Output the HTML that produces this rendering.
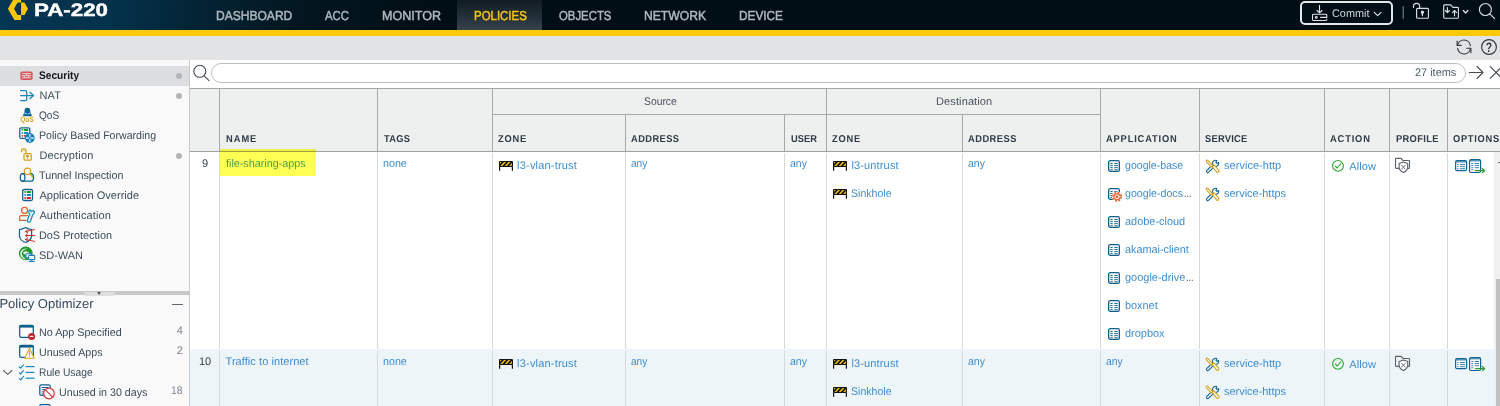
<!DOCTYPE html>
<html lang="en"><head><meta charset="utf-8"><title>PA-220 - Policies - Security</title>
<style>
html,body{margin:0;padding:0}
body{width:1500px;height:406px;overflow:hidden;position:relative;background:#fff;font-family:"Liberation Sans",sans-serif;text-rendering:geometricPrecision}
.t{position:absolute;white-space:nowrap;display:block;transform-origin:0 0}
i,b,s{position:absolute;display:block}
#topbar{position:absolute;left:0;top:0;width:1500px;height:30px;background:linear-gradient(100deg,#053653 0px,#04324c 110px,#032232 205px,#02161f 305px,#010e15 425px,#010e15 100%)}
#tab-active{position:absolute;left:457px;top:0;width:85px;height:30px;background:linear-gradient(180deg,#111c24 0%,#222e37 50%,#36424b 100%)}
#commit{position:absolute;left:1300px;top:1px;width:89px;height:20px;border:2px solid #e3e7ea;border-radius:5px}
#stripe{position:absolute;left:0;top:30px;width:1500px;height:6px;background:#fdc90b}
#toolbar{position:absolute;left:0;top:36px;width:1500px;height:24px;background:#e2e3e4}
#side{position:absolute;left:0;top:0;width:190px;height:406px;background:linear-gradient(90deg,#f9f9f9 189px,#c5c9cc 189px) 0 60px/190px 346px no-repeat}
#sel{position:absolute;left:0;top:66px;width:189px;height:20px;background:#dcddde}
.dot{left:176px;width:6px;height:6px;border-radius:3px;background:#b4b5b6}
#split{position:absolute;left:0;top:291px;width:189px;height:4px;background:#c6c8ca}
#split b{left:83px;top:0.5px;width:32.5px;height:4.5px;background:#dcdedf;clip-path:polygon(0 0,100% 0,91.5% 100%,9.5% 100%)}
#split s{left:96.8px;top:0.8px;width:0;height:0;border-left:2.8px solid transparent;border-right:2.8px solid transparent;border-top:3.6px solid #55585b}
#minus{left:171.5px;top:304px;width:11px;height:1px;background:#5d6873}
#searchrow{position:absolute;left:190px;top:60px;width:1310px;height:28px;background:#fff}
#pill{position:absolute;left:21px;top:2.5px;width:1253px;height:18.5px;border:1px solid #bcc0c4;border-radius:10px}
#thead{position:absolute;left:190px;top:88px;width:1310px;height:63px;background:#eeefef;border-top:1px solid #a3a7ab;border-bottom:1px solid #9da1a5;box-sizing:content-box;height:62px}
.vh{width:1px;background:#a6aaae}
.hh{height:1px;background:#a6aaae}
.vb{width:1px;background:#d7dadc}
#row9{position:absolute;left:190px;top:152px;width:1304px;height:197px;background:#fff}
#row10{position:absolute;left:190px;top:349px;width:1304px;height:57px;background:#eef5f8}
#hl{position:absolute;left:220px;top:149px;width:96px;height:27px;background:#ffff54;mix-blend-mode:multiply}
#strack{position:absolute;left:1494px;top:152px;width:6px;height:254px;background:#f1f1f1}
#sthumb{position:absolute;left:1496px;top:279px;width:4px;height:127px;background:#c1c1c1}
#icons{position:absolute;left:0;top:0;width:1500px;height:406px;pointer-events:none}
#tick{position:absolute;left:1498px;top:162px;width:2px;height:1px;background:#666}

</style></head>
<body>
<div id="topbar">
<div id="tab-active"></div>
<span class="t logo" style="left:34.0px;top:-1.00px;font-size:18px;line-height:22px;transform:scaleX(1.2396);font-weight:bold;color:#fff;-webkit-text-stroke:0.4px #fff;">PA-220</span>
<span class="t nav" style="left:216.2px;top:7.00px;font-size:13px;line-height:17px;transform:scaleX(0.9265);color:#adb6bd;-webkit-text-stroke:0.5px;">DASHBOARD</span>
<span class="t nav" style="left:325.0px;top:7.00px;font-size:13px;line-height:17px;transform:scaleX(0.8744);color:#adb6bd;-webkit-text-stroke:0.5px;">ACC</span>
<span class="t nav" style="left:382.0px;top:7.00px;font-size:13px;line-height:17px;transform:scaleX(0.9649);color:#adb6bd;-webkit-text-stroke:0.5px;">MONITOR</span>
<span class="t nav" style="left:473.5px;top:7.00px;font-size:13px;line-height:17px;transform:scaleX(0.8805);color:#f4c41b;-webkit-text-stroke:0.5px;">POLICIES</span>
<span class="t nav" style="left:559.0px;top:7.00px;font-size:13px;line-height:17px;transform:scaleX(0.8740);color:#adb6bd;-webkit-text-stroke:0.5px;">OBJECTS</span>
<span class="t nav" style="left:644.0px;top:7.00px;font-size:13px;line-height:17px;transform:scaleX(0.9332);color:#adb6bd;-webkit-text-stroke:0.5px;">NETWORK</span>
<span class="t nav" style="left:739.0px;top:7.00px;font-size:13px;line-height:17px;transform:scaleX(0.9091);color:#adb6bd;-webkit-text-stroke:0.5px;">DEVICE</span>
<div id="commit"></div>
<span class="t" style="left:1331.8px;top:7.00px;font-size:11px;line-height:14px;transform:scaleX(0.9898);color:#d3d8dc;">Commit</span>
</div>
<div id="stripe"></div>
<div id="toolbar"></div>
<div id="side">
<div id="sel"></div>
<span class="t" style="left:39.4px;top:69.00px;font-size:11px;line-height:14px;transform:scaleX(0.9238);font-weight:bold;color:#12181f;">Security</span>
<span class="t" style="left:39.4px;top:89.00px;font-size:11px;line-height:14px;letter-spacing:0.158px;color:#3c4b5c;">NAT</span>
<span class="t" style="left:39.4px;top:109.00px;font-size:11px;line-height:14px;transform:scaleX(0.9177);color:#3c4b5c;">QoS</span>
<span class="t" style="left:39.4px;top:129.00px;font-size:11px;line-height:14px;transform:scaleX(0.9625);color:#3c4b5c;">Policy Based Forwarding</span>
<span class="t" style="left:39.4px;top:149.00px;font-size:11px;line-height:14px;letter-spacing:0.147px;color:#3c4b5c;">Decryption</span>
<span class="t" style="left:39.4px;top:169.00px;font-size:11px;line-height:14px;transform:scaleX(0.9766);color:#3c4b5c;">Tunnel Inspection</span>
<span class="t" style="left:39.4px;top:189.00px;font-size:11px;line-height:14px;letter-spacing:0.034px;color:#3c4b5c;">Application Override</span>
<span class="t" style="left:39.4px;top:209.00px;font-size:11px;line-height:14px;letter-spacing:0.145px;color:#3c4b5c;">Authentication</span>
<span class="t" style="left:39.4px;top:229.00px;font-size:11px;line-height:14px;transform:scaleX(0.9867);color:#3c4b5c;">DoS Protection</span>
<span class="t" style="left:39.4px;top:249.00px;font-size:11px;line-height:14px;transform:scaleX(0.9955);color:#3c4b5c;">SD-WAN</span>
<i class="dot" style="top:72.5px"></i>
<i class="dot" style="top:92.5px"></i>
<i class="dot" style="top:152.5px"></i>
<div id="split"><b></b><s></s></div>
<span class="t" style="left:-0.6px;top:295.00px;font-size:13px;line-height:17px;letter-spacing:0.013px;color:#33475b;">Policy Optimizer</span>
<i id="minus"></i>
<span class="t" style="left:39.3px;top:326.00px;font-size:11px;line-height:14px;transform:scaleX(0.9800);color:#3c4b5c;">No App Specified</span>
<span class="t" style="left:176.8px;top:324.00px;font-size:11px;line-height:14px;color:#7b8794;">4</span>
<span class="t" style="left:39.3px;top:346.00px;font-size:11px;line-height:14px;transform:scaleX(0.9704);color:#3c4b5c;">Unused Apps</span>
<span class="t" style="left:176.8px;top:344.00px;font-size:11px;line-height:14px;color:#7b8794;">2</span>
<span class="t" style="left:38.8px;top:366.00px;font-size:11px;line-height:14px;transform:scaleX(0.9326);color:#3c4b5c;">Rule Usage</span>
<span class="t" style="left:59.3px;top:386.00px;font-size:11px;line-height:14px;transform:scaleX(0.9691);color:#3c4b5c;">Unused in 30 days</span>
<span class="t" style="left:171.0px;top:384.00px;font-size:11px;line-height:14px;transform:scaleX(0.9317);color:#7b8794;">18</span>
</div>
<div id="searchrow"><div id="pill"></div></div>
<span class="t" style="left:1414.7px;top:66.00px;font-size:11px;line-height:14px;transform:scaleX(0.9934);color:#4d5b6a;">27 items</span>
<div id="thead"></div>
<i class="vh" style="left:219px;top:89px;height:62px"></i>
<i class="vh" style="left:377px;top:89px;height:62px"></i>
<i class="vh" style="left:492px;top:89px;height:62px"></i>
<i class="vh" style="left:1100px;top:89px;height:62px"></i>
<i class="vh" style="left:1199px;top:89px;height:62px"></i>
<i class="vh" style="left:1324px;top:89px;height:62px"></i>
<i class="vh" style="left:1389px;top:89px;height:62px"></i>
<i class="vh" style="left:1447px;top:89px;height:62px"></i>
<i class="vh" style="left:625px;top:115px;height:36px"></i>
<i class="vh" style="left:784px;top:115px;height:36px"></i>
<i class="vh" style="left:962px;top:115px;height:36px"></i>
<i class="vh" style="left:826px;top:89px;height:62px"></i>
<i class="hh" style="left:493px;top:114px;width:607px"></i>
<span class="t" style="left:643.7px;top:95.00px;font-size:11px;line-height:14px;transform:scaleX(0.9411);color:#47525e;">Source</span>
<span class="t" style="left:936.0px;top:95.00px;font-size:11px;line-height:14px;letter-spacing:0.117px;color:#47525e;">Destination</span>
<span class="t" style="left:225.5px;top:133.00px;font-size:10px;line-height:13px;letter-spacing:1.046px;transform:scaleX(0.9300);font-weight:bold;color:#2f3b47;">NAME</span>
<span class="t" style="left:383.5px;top:133.00px;font-size:10px;line-height:13px;letter-spacing:0.271px;transform:scaleX(0.9300);font-weight:bold;color:#2f3b47;">TAGS</span>
<span class="t" style="left:498.1px;top:133.00px;font-size:10px;line-height:13px;letter-spacing:0.884px;transform:scaleX(0.9300);font-weight:bold;color:#2f3b47;">ZONE</span>
<span class="t" style="left:631.3px;top:133.00px;font-size:10px;line-height:13px;letter-spacing:0.453px;transform:scaleX(0.9300);font-weight:bold;color:#2f3b47;">ADDRESS</span>
<span class="t" style="left:790.6px;top:133.00px;font-size:10px;line-height:13px;letter-spacing:0.058px;transform:scaleX(0.9300);font-weight:bold;color:#2f3b47;">USER</span>
<span class="t" style="left:832.2px;top:133.00px;font-size:10px;line-height:13px;letter-spacing:0.812px;transform:scaleX(0.9300);font-weight:bold;color:#2f3b47;">ZONE</span>
<span class="t" style="left:968.0px;top:133.00px;font-size:10px;line-height:13px;letter-spacing:0.524px;transform:scaleX(0.9300);font-weight:bold;color:#2f3b47;">ADDRESS</span>
<span class="t" style="left:1106.2px;top:133.00px;font-size:10px;line-height:13px;letter-spacing:0.909px;transform:scaleX(0.9300);font-weight:bold;color:#2f3b47;">APPLICATION</span>
<span class="t" style="left:1205.2px;top:133.00px;font-size:10px;line-height:13px;letter-spacing:0.276px;transform:scaleX(0.9300);font-weight:bold;color:#2f3b47;">SERVICE</span>
<span class="t" style="left:1330.4px;top:133.00px;font-size:10px;line-height:13px;letter-spacing:0.915px;transform:scaleX(0.9300);font-weight:bold;color:#2f3b47;">ACTION</span>
<span class="t" style="left:1395.7px;top:133.00px;font-size:10px;line-height:13px;letter-spacing:0.376px;transform:scaleX(0.9300);font-weight:bold;color:#2f3b47;">PROFILE</span>
<span class="t" style="left:1453.2px;top:133.00px;font-size:10px;line-height:13px;letter-spacing:0.761px;transform:scaleX(0.9300);font-weight:bold;color:#2f3b47;">OPTIONS</span>
<div id="row9"></div><div id="row10"></div>
<i class="vb" style="left:219px;top:153px;height:196px"></i>
<i class="vb" style="left:219px;top:351px;height:55px"></i>
<i class="vb" style="left:377px;top:153px;height:196px"></i>
<i class="vb" style="left:377px;top:351px;height:55px"></i>
<i class="vb" style="left:492px;top:153px;height:196px"></i>
<i class="vb" style="left:492px;top:351px;height:55px"></i>
<i class="vb" style="left:1100px;top:153px;height:196px"></i>
<i class="vb" style="left:1100px;top:351px;height:55px"></i>
<i class="vb" style="left:1199px;top:153px;height:196px"></i>
<i class="vb" style="left:1199px;top:351px;height:55px"></i>
<i class="vb" style="left:1324px;top:153px;height:196px"></i>
<i class="vb" style="left:1324px;top:351px;height:55px"></i>
<i class="vb" style="left:1389px;top:153px;height:196px"></i>
<i class="vb" style="left:1389px;top:351px;height:55px"></i>
<i class="vb" style="left:1447px;top:153px;height:196px"></i>
<i class="vb" style="left:1447px;top:351px;height:55px"></i>
<i class="vb" style="left:625px;top:153px;height:196px"></i>
<i class="vb" style="left:625px;top:351px;height:55px"></i>
<i class="vb" style="left:784px;top:153px;height:196px"></i>
<i class="vb" style="left:784px;top:351px;height:55px"></i>
<i class="vb" style="left:826px;top:153px;height:196px"></i>
<i class="vb" style="left:826px;top:351px;height:55px"></i>
<i class="vb" style="left:962px;top:153px;height:196px"></i>
<i class="vb" style="left:962px;top:351px;height:55px"></i>
<div id="hl"></div>
<div id="strack"></div><div id="sthumb"></div><i id="tick"></i>
<span class="t" style="left:202.0px;top:157.00px;font-size:11px;line-height:14px;color:#2f3b47;">9</span>
<span class="t" style="left:225.5px;top:157.00px;font-size:11px;line-height:14px;transform:scaleX(0.9801);color:#4f9d52;">file-sharing-apps</span>
<span class="t" style="left:383.4px;top:157.00px;font-size:11px;line-height:14px;transform:scaleX(0.9726);color:#3b8dd1;">none</span>
<span class="t" style="left:517.1px;top:159.00px;font-size:11px;line-height:14px;letter-spacing:0.187px;color:#3b8dd1;">l3-vlan-trust</span>
<span class="t" style="left:631.3px;top:157.00px;font-size:11px;line-height:14px;transform:scaleX(0.9191);color:#3b8dd1;">any</span>
<span class="t" style="left:790.0px;top:157.00px;font-size:11px;line-height:14px;transform:scaleX(0.9529);color:#3b8dd1;">any</span>
<span class="t" style="left:851.4px;top:159.00px;font-size:11px;line-height:14px;letter-spacing:0.150px;color:#3b8dd1;">l3-untrust</span>
<span class="t" style="left:851.4px;top:187.00px;font-size:11px;line-height:14px;transform:scaleX(0.9598);color:#3b8dd1;">Sinkhole</span>
<span class="t" style="left:968.0px;top:157.00px;font-size:11px;line-height:14px;transform:scaleX(0.9585);color:#3b8dd1;">any</span>
<span class="t" style="left:1224.0px;top:159.00px;font-size:11px;line-height:14px;letter-spacing:0.032px;color:#3b8dd1;">service-http</span>
<span class="t" style="left:1224.0px;top:187.00px;font-size:11px;line-height:14px;transform:scaleX(0.9943);color:#3b8dd1;">service-https</span>
<span class="t" style="left:1349.2px;top:160.00px;font-size:11px;line-height:14px;letter-spacing:0.128px;color:#3b8dd1;">Allow</span>
<span class="t" style="left:198.9px;top:355.00px;font-size:11px;line-height:14px;letter-spacing:0.065px;color:#2f3b47;">10</span>
<span class="t" style="left:225.5px;top:355.00px;font-size:11px;line-height:14px;letter-spacing:0.065px;color:#3b8dd1;">Traffic to internet</span>
<span class="t" style="left:383.4px;top:355.00px;font-size:11px;line-height:14px;transform:scaleX(0.9726);color:#3b8dd1;">none</span>
<span class="t" style="left:517.1px;top:357.00px;font-size:11px;line-height:14px;letter-spacing:0.187px;color:#3b8dd1;">l3-vlan-trust</span>
<span class="t" style="left:631.3px;top:355.00px;font-size:11px;line-height:14px;transform:scaleX(0.9191);color:#3b8dd1;">any</span>
<span class="t" style="left:790.0px;top:355.00px;font-size:11px;line-height:14px;transform:scaleX(0.9529);color:#3b8dd1;">any</span>
<span class="t" style="left:851.4px;top:357.00px;font-size:11px;line-height:14px;letter-spacing:0.150px;color:#3b8dd1;">l3-untrust</span>
<span class="t" style="left:851.4px;top:385.00px;font-size:11px;line-height:14px;transform:scaleX(0.9598);color:#3b8dd1;">Sinkhole</span>
<span class="t" style="left:968.0px;top:355.00px;font-size:11px;line-height:14px;transform:scaleX(0.9585);color:#3b8dd1;">any</span>
<span class="t" style="left:1224.0px;top:357.00px;font-size:11px;line-height:14px;letter-spacing:0.032px;color:#3b8dd1;">service-http</span>
<span class="t" style="left:1224.0px;top:385.00px;font-size:11px;line-height:14px;transform:scaleX(0.9943);color:#3b8dd1;">service-https</span>
<span class="t" style="left:1349.2px;top:358.00px;font-size:11px;line-height:14px;letter-spacing:0.128px;color:#3b8dd1;">Allow</span>
<span class="t" style="left:1106.3px;top:355.00px;font-size:11px;line-height:14px;transform:scaleX(0.9416);color:#3b8dd1;">any</span>
<span class="t" style="left:1125.0px;top:159.00px;font-size:11px;line-height:14px;transform:scaleX(0.9612);color:#3b8dd1;">google-base</span>
<span class="t" style="left:1125.0px;top:187.00px;font-size:11px;line-height:14px;transform:scaleX(0.9678);color:#3b8dd1;">google-docs</span>
<span class="t" style="left:1183.8px;top:187.00px;font-size:11px;line-height:14px;transform:scaleX(0.8071);color:#3a3f45;">...</span>
<span class="t" style="left:1125.0px;top:215.00px;font-size:11px;line-height:14px;transform:scaleX(0.9942);color:#3b8dd1;">adobe-cloud</span>
<span class="t" style="left:1125.0px;top:243.00px;font-size:11px;line-height:14px;transform:scaleX(0.9845);color:#3b8dd1;">akamai-client</span>
<span class="t" style="left:1125.0px;top:271.00px;font-size:11px;line-height:14px;transform:scaleX(0.9961);color:#3b8dd1;">google-drive</span>
<span class="t" style="left:1186.1px;top:271.00px;font-size:11px;line-height:14px;transform:scaleX(0.8071);color:#3a3f45;">...</span>
<span class="t" style="left:1125.0px;top:299.00px;font-size:11px;line-height:14px;transform:scaleX(0.9901);color:#3b8dd1;">boxnet</span>
<span class="t" style="left:1125.0px;top:327.00px;font-size:11px;line-height:14px;transform:scaleX(0.9962);color:#3b8dd1;">dropbox</span>
<svg id="icons" width="1500" height="406" viewBox="0 0 1500 406" fill="none" stroke-linecap="round" stroke-linejoin="round">
<defs>
<g id="zone"><rect x="0" y="0" width="14" height="6" rx="1" fill="#141414"/><path d="M1,1 L2.6,1 L1,2.8Z M1.4,5 L5,1 L7,1 L3.4,5Z M5.8,5 L9.4,1 L11.4,1 L7.8,5Z M10.2,5 L13,1.9 L13,4.1 L12.2,5Z" fill="#f7c30c"/><path d="M0.6,5.5V9.8M13.4,5.5V9.8" stroke="#141414" stroke-width="1.2" stroke-linecap="butt"/></g>
<g id="app"><rect x="0.65" y="0.65" width="10.7" height="10.7" rx="1.6" stroke="#0f608c" stroke-width="1.3" fill="#fff"/><path d="M2.3,3.45H4.7M6.3,3.45H9.8M2.3,5.55H4.7M6.3,5.55H9.8M2.3,7.65H4.7M6.3,7.65H9.8M2.3,9.75H4.7M6.3,9.75H9.8" stroke="#0f608c" stroke-width="0.95" stroke-linecap="butt"/></g>
<g id="gear"><circle r="5.2" fill="#fff"/><circle r="4.15" stroke="#e8622f" stroke-width="1.7" stroke-dasharray="1.8 1.46" stroke-linecap="butt"/><circle r="3.5" fill="#e8622f"/><circle r="2" stroke="#fff" stroke-width="1"/></g>
<g id="svc" stroke-width="1.1"><path d="M7.1,4.5 L1.3,10.3 Q0.4,11.4 1.3,12.2 Q2.2,13 3.1,12.1 L8.9,6.3" stroke="#0f6590" fill="#fff"/><path d="M13,2.4 A3.1,3.1 0 1 1 11.2,0.4 L10.3,2.3 L11.3,3.3 Z" stroke="#0f6590" fill="#fff"/><path d="M0.9,1.7 Q0.2,0.7 1.1,0.2 Q2,-0.2 2.7,0.7 L7,5.6 L5.6,6.9 Z" stroke="#d6a21c" fill="#fff"/><path d="M6.6,6.6 L8.5,4.9 L13,9.7 Q13.9,11 12.8,11.9 Q11.7,12.7 10.7,11.5 Z" stroke="#d6a21c" fill="#fff"/></g>
<g id="allow"><circle r="5.4" stroke="#27a52f" stroke-width="1.1"/><path d="M-2.6,0.2 L-0.8,2.1 L2.7,-2" stroke="#27a52f" stroke-width="1.1"/></g>
<g id="prof" stroke="#59626c" stroke-width="1.1"><path d="M4,10.5H1.5Q0.5,10.5 0.5,9.5V1.3Q0.5,0.5 1.3,0.5H6L8,2.6H13.6Q14.5,2.6 14.5,3.5V9.5Q14.5,10.5 13.6,10.5H12.8"/><path d="M8.4,4.1 L12.7,5.6 V9.3 Q12.7,12.6 8.4,14.7 Q4.1,12.6 4.1,9.3 V5.6 Z" fill="#fff"/><path d="M6.5,7.3 L10.3,11.3 M10.3,7.3 L6.5,11.3" stroke-width="0.9"/></g>
<g id="opt" stroke="#0f6496"><rect x="0.6" y="1.7" width="11" height="10" rx="1.5" stroke-width="1.2" fill="#fff"/><path d="M1,2.9H11.2" stroke-width="1"/><path d="M2.1,5.5H3.6M4.9,5.5H10.2M2.1,7.6H3.6M4.9,7.6H10.2M2.1,9.7H3.6M4.9,9.7H10.2" stroke-width="0.8" stroke-linecap="butt"/><rect x="14.6" y="0.5" width="11" height="13" rx="1.5" stroke-width="1.2" fill="#fff"/><path d="M15,1.8H25.2" stroke-width="1"/><path d="M16.3,4.5H18.3M19.6,4.5H24M16.3,6.6H18.3M19.6,6.6H24M16.3,8.7H18.3M19.6,8.7H24M16.3,10.8H18.3" stroke-width="0.8" stroke-linecap="butt"/><path d="M20.4,11.6H29.3M27.3,9.5L29.7,11.6L27.3,13.7" stroke="#2a9a33" stroke-width="1.2"/></g>
</defs>
<path d="M21.1,-2.5 L14.4,-2.5 L7.9,8.7 L14.4,19.9 L21.1,19.9 L21.1,14.9 L17.6,14.9 L14,8.7 L17.6,2.4 L21.1,2.4 Z M21.1,2.4 L24.5,2.4 L28,8.7 L24.5,14.9 L21.1,14.9 Z" fill="#fdc70a"/>
<g stroke="#dfe3e6" stroke-width="1.1"><path d="M1319.5,5.2V12.6M1317,10.5L1319.5,12.9L1322,10.5"/><path d="M1326.8,17.4H1320.6M1326.8,17.4V15.2Q1326.8,14.3 1325.9,14.3H1313.4Q1312.5,14.3 1312.5,15.2V19.6Q1312.5,20.5 1313.4,20.5H1325.9Q1326.8,20.5 1326.8,19.6V19.2"/><circle cx="1316.3" cy="17.4" r="0.9"/><path d="M1374.3,12.3L1377.7,15.7L1381.1,12.3"/></g>
<path d="M1403.25,6.3V18.8" stroke="#56646f" stroke-width="1.5" stroke-linecap="butt"/>
<g stroke="#d9dde0" stroke-width="1.15"><rect x="1416.6" y="8.4" width="11.8" height="9.8" rx="1"/><path d="M1413.5,7.4V6.4A3.1,3.1 0 0 1 1419.7,6.4V8.2"/><circle cx="1422.4" cy="12.2" r="1.1" fill="#d9dde0"/><path d="M1422.4,12.5V15.6" stroke-width="1.3"/></g>
<g stroke="#d9dde0" stroke-width="1.15"><path d="M1443.7,5.6Q1443.7,4.8 1444.6,4.8H1450.6L1453,7.3H1457.5Q1458.4,7.3 1458.4,8.2V17.3Q1458.4,18.2 1457.5,18.2H1444.6Q1443.7,18.2 1443.7,17.3Z"/><path d="M1447.4,7.6V12.4M1445.4,10.5L1447.4,12.6L1449.4,10.5M1454.5,15.8V10.8M1452.5,12.6L1454.5,10.5L1456.5,12.6"/><path d="M1463.3,10.5L1465.6,12.9L1467.9,10.5" stroke-width="1.4"/></g>
<g stroke="#d9dde0" stroke-width="1.15"><circle cx="1485.4" cy="9.5" r="6"/><path d="M1489.8,13.9L1494.6,18.6"/></g>
<g stroke="#333a40" stroke-width="1.15"><path d="M1457.6,45.2A6.5,6.5 0 0 1 1470.4,45.6"/><path d="M1457.1,41V45.4H1461.2"/><path d="M1470.4,48.8A6.5,6.5 0 0 1 1457.6,48.4"/><path d="M1470.9,52.7V48.2H1466.7"/></g>
<circle cx="1489" cy="47" r="7.4" stroke="#333a40" stroke-width="1.15"/>
<text transform="translate(1489,51.8) scale(0.8,1.06)" text-anchor="middle" font-family="Liberation Sans, sans-serif" font-weight="bold" font-size="13" fill="#333a40" stroke="none">?</text>
<g stroke="#444c54" stroke-width="1.1"><circle cx="199.8" cy="71.3" r="6"/><path d="M204.2,75.8L209,80.6"/><path d="M1469.2,72.5H1482.8M1477,66.5L1483,72.5L1477,78.5"/><path d="M1490.2,66.6L1502,78.4M1502,66.6L1490.2,78.4"/></g>
<rect x="20.4" y="71.5" width="12.2" height="8.4" rx="1.7" fill="#d4545a"/><path d="M22,73.6H31M21.6,75.7H31.4M22,77.8H31" stroke="#f4d6d7" stroke-width="1" stroke-linecap="butt"/><path d="M26.5,73.6V75.7M24.3,75.7V77.8M28.7,75.7V77.8" stroke="#f4d6d7" stroke-width="0.9" stroke-linecap="butt"/>
<g stroke="#1a86c0" stroke-width="1.25"><path d="M20.6,90.5H25.6Q26.7,90.5 26.7,91.6V99.4Q26.7,100.5 25.6,100.5H20.6M20.6,95.5H33.4M30,92.2L33.5,95.5L30,98.8"/></g>
<path d="M27.4,107.8Q30.4,107.8 30.3,111.2L30.3,112.3L31.8,115.2Q31.9,116.3 30.4,116.3H24.4Q22.9,116.3 23,115.2L24.5,112.3L24.5,111.2Q24.4,107.8 27.4,107.8Z" fill="#0f6590"/><path d="M24.8,113.3L26.6,113.9M30,113.3L28.2,113.9" stroke="#cfe3ee" stroke-width="0.8"/>
<text x="20.2" y="122.2" font-family="Liberation Sans, sans-serif" font-weight="bold" font-size="8" fill="#d4a51f" stroke="none" textLength="13.4" lengthAdjust="spacingAndGlyphs">QoS</text>
<rect x="19.8" y="127.8" width="10" height="10.6" rx="1.5" stroke="#14608c" stroke-width="1.3" fill="#fff"/><path d="M21.6,130H22.8M23.8,130H28.2" stroke="#1f9a2a" stroke-width="1.8" stroke-linecap="butt"/><path d="M21.6,133H22.8M23.8,133H28.2" stroke="#1b86c8" stroke-width="1.8" stroke-linecap="butt"/><path d="M21.6,135.9H22.8M23.8,135.9H26" stroke="#cc3333" stroke-width="1.8" stroke-linecap="butt"/><circle cx="29.8" cy="138" r="4.9" fill="#1782c2"/><path d="M29.8,134V142M25.8,138H33.8" stroke="#cfe6f5" stroke-width="1.3" stroke-linecap="butt"/><circle cx="29.8" cy="138" r="1.1" fill="#1782c2"/>
<g stroke="#d4a21c" stroke-width="1.3"><rect x="24" y="153.6" width="7.2" height="6.6" rx="1"/><path d="M21.6,151.6V151A2.2,2.2 0 0 1 26,151V153.4"/><circle cx="27.5" cy="156.2" r="0.8" fill="#d4a21c"/><path d="M27.5,156.4V158.2" stroke-width="1.1"/></g>
<g stroke="#0f6292" stroke-width="1.3"><path d="M22.6,173.7H31.4Q33.6,174.2 33.6,177.5Q33.6,180.8 31.4,181.2H22.6"/><ellipse cx="22.6" cy="177.45" rx="2.3" ry="3.8"/></g><g stroke="#d4a21c" stroke-width="1.25"><circle cx="27.5" cy="171.3" r="3.2" fill="#f9f9f9"/><path d="M29.9,173.7L32.8,177.3"/></g>
<rect x="22.7" y="189.5" width="9.8" height="11" rx="1.5" stroke="#14608c" stroke-width="1.3" fill="#fff"/><path d="M24.4,192H25.8M26.7,192H30.9" stroke="#1f9a2a" stroke-width="2" stroke-linecap="butt"/><path d="M24.4,195H25.8M26.7,195H30.9" stroke="#1b86c8" stroke-width="2" stroke-linecap="butt"/><path d="M24.4,198.1H25.8M26.7,198.1H30.9" stroke="#c62828" stroke-width="2" stroke-linecap="butt"/>
<g stroke="#e8622f" stroke-width="1.25"><circle cx="24.6" cy="210.4" r="3"/><path d="M27.4,215.6H21Q19.6,215.6 19.6,217V220.4H26"/></g><g stroke="#1b8bc6" stroke-width="1.2" fill="#dcedf8"><path d="M29,213.2 Q27.9,210.4 30.4,209.9 L31.3,211.6 L32.8,210.4 Q35,211.2 34.2,213.6 Q33.7,214.7 32.7,214.9 L30.6,221 Q29.9,222.6 28.4,222.1 Q26.9,221.4 27.4,219.9 L29.6,214.2 Z"/></g>
<path d="M25.6,227.5Q28.5,229.3 31.6,229.5V236.5Q30.8,240.4 25.6,242.5Q20.2,240.4 19.5,236.5V229.5Q22.7,229.3 25.6,227.5Z" stroke="#14608c" stroke-width="1.25"/><g stroke="#c8312f" stroke-width="1"><path d="M25.6,231.6L34.6,229.6M25.6,235.5H34.8M25.6,239.5L34.6,241.4"/><path d="M27.4,230.1L25.5,231.6L27.6,232.7M27.3,234.1L25.5,235.5L27.3,236.9M27.6,238.3L25.5,239.5L27.4,240.9" /></g>
<circle cx="25.8" cy="253.4" r="6.3" fill="#22992c" stroke="#22992c" stroke-width="1.1"/><path d="M27.8,248.2Q22.6,249.8 21.6,253.4Q22.6,257.8 26,259.4Q20.8,259 20.2,253.6Q20.8,248.4 27.8,248.2Z" fill="#f3faf3"/><path d="M22.8,253L26.6,250.4V252.2H29V254H26.6V255.6Z" fill="#f3faf3"/><g stroke="#1782c8" stroke-width="1.1" fill="#fff"><rect x="25.9" y="253.7" width="5.4" height="4.2" rx="0.7"/><rect x="28.7" y="255.4" width="6" height="4.2" rx="0.7"/><path d="M31.7,259.8V261.4M29,261.5H34.2"/></g>
<rect x="19.7" y="325.40000000000003" width="13.6" height="12" rx="1.4" stroke="#0d5f8c" stroke-width="1.3" fill="#fff"/><path d="M19.7,326.40000000000003H33.3" stroke="#0d5f8c" stroke-width="2.4" stroke-linecap="butt"/>
<circle cx="31.6" cy="336.4" r="3.5" fill="#c1272d"/><path d="M29.8,336.4H33.4" stroke="#fff" stroke-width="1.1" stroke-linecap="butt"/>
<rect x="19.7" y="345.40000000000003" width="13.6" height="12" rx="1.4" stroke="#0d5f8c" stroke-width="1.3" fill="#fff"/><path d="M19.7,346.40000000000003H33.3" stroke="#0d5f8c" stroke-width="2.4" stroke-linecap="butt"/>
<path d="M29.5,348.3L34.2,358.2H24.8Z" fill="#fff" stroke="#d4a21c" stroke-width="1.1"/><path d="M29.5,351.6V355" stroke="#d4a21c" stroke-width="1.1"/><circle cx="29.5" cy="356.7" r="0.6" fill="#d4a21c"/>
<path d="M3.5,370.5L7.7,374.4L11.9,370.5" stroke="#59626c" stroke-width="1.05"/>
<path d="M25.6,366.6H34.5" stroke="#1b86c0" stroke-width="1.2" stroke-linecap="butt"/><path d="M19.4,367.0L20.8,368.20000000000005L23.4,364.90000000000003" stroke="#1b86c0" stroke-width="1.2"/>
<path d="M25.6,372.4H34.5" stroke="#1b86c0" stroke-width="1.2" stroke-linecap="butt"/><path d="M19.4,372.79999999999995L20.8,374.0L23.4,370.7" stroke="#1b86c0" stroke-width="1.2"/>
<path d="M25.6,378.2H34.5" stroke="#1b86c0" stroke-width="1.2" stroke-linecap="butt"/><path d="M19.4,378.59999999999997L20.8,379.8L23.4,376.5" stroke="#1b86c0" stroke-width="1.2"/>
<rect x="39.8" y="384.8" width="10.4" height="10.6" rx="1.5" stroke="#14608c" stroke-width="1.3" fill="#fff"/><path d="M41.6,387.5H48.6M41.6,389.7H48.6M41.6,391.9H44.5M41.6,393.9H43.5" stroke="#14608c" stroke-width="0.95" stroke-linecap="butt"/><circle cx="49" cy="393.5" r="5.3" fill="#fff" stroke="#d9363a" stroke-width="1.2"/><path d="M45.3,389.9L52.7,397.1" stroke="#d9363a" stroke-width="1.2"/>
<rect x="39.8" y="404.6" width="10.4" height="10.6" rx="1.5" stroke="#14608c" stroke-width="1.3" fill="#fff"/>
<use href="#zone" x="499" y="161"/>
<use href="#zone" x="833" y="161"/>
<use href="#zone" x="833" y="189"/>
<use href="#svc" x="1205.6" y="160.1"/>
<use href="#svc" x="1205.6" y="188.1"/>
<use href="#allow" x="1338" y="165.9"/>
<use href="#prof" x="1395" y="157.9"/>
<use href="#opt" x="1455" y="159"/>
<use href="#zone" x="499" y="359"/>
<use href="#zone" x="833" y="359"/>
<use href="#zone" x="833" y="387"/>
<use href="#svc" x="1205.6" y="358.1"/>
<use href="#svc" x="1205.6" y="386.1"/>
<use href="#allow" x="1338" y="363.9"/>
<use href="#prof" x="1395" y="355.9"/>
<use href="#opt" x="1455" y="357"/>
<use href="#app" x="1108" y="160.0"/>
<use href="#app" x="1108" y="188.0"/>
<use href="#app" x="1108" y="216.0"/>
<use href="#app" x="1108" y="244.0"/>
<use href="#app" x="1108" y="272.0"/>
<use href="#app" x="1108" y="300.0"/>
<use href="#app" x="1108" y="328.0"/>
<use href="#gear" x="1117.1" y="196.8"/>
</svg>
</body></html>
